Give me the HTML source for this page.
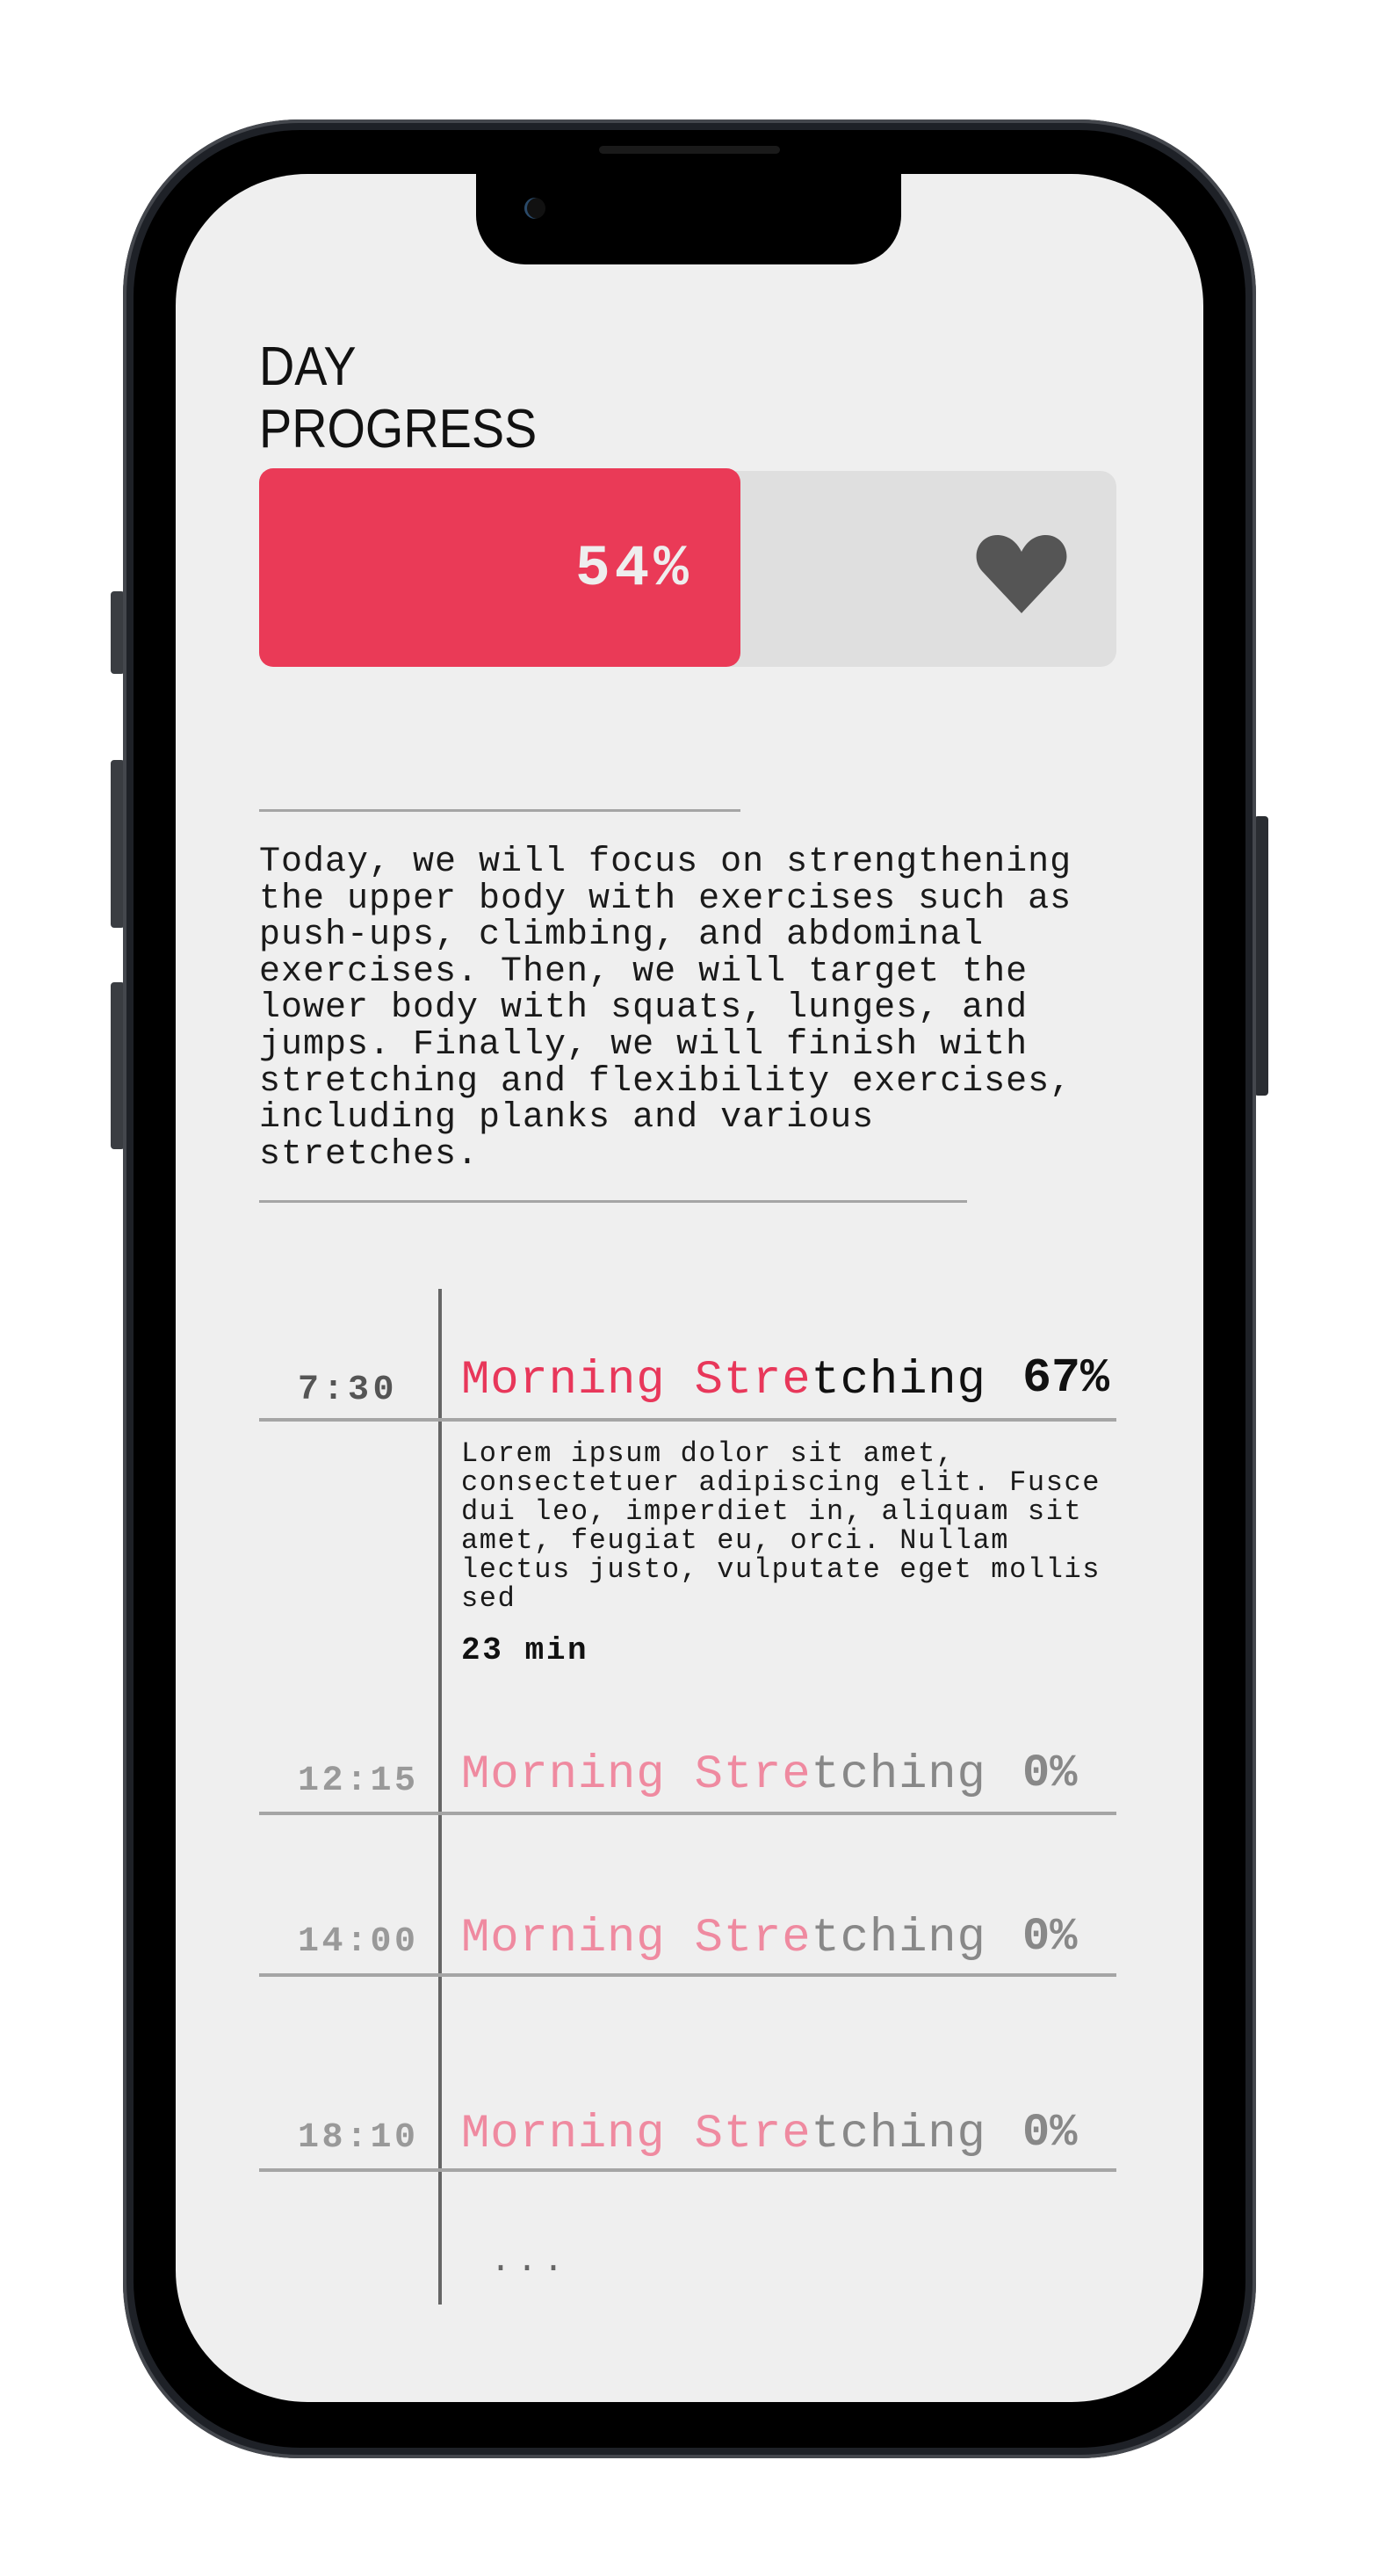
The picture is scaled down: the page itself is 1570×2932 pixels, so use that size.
<!DOCTYPE html>
<html><head><meta charset="utf-8"><style>
*{margin:0;padding:0;box-sizing:border-box}
body{width:1570px;height:2932px;background:#fff;position:relative;overflow:hidden;font-family:"Liberation Mono",monospace}
.a{position:absolute}
.t{position:absolute;line-height:1;white-space:pre}
.hl{position:absolute;height:4px;background:#a5a5a5}
</style></head><body>
<div class="a" style="left:126px;top:673px;width:16px;height:94px;background:#3a3d42;border-radius:4px"></div>
<div class="a" style="left:126px;top:865px;width:16px;height:191px;background:#3a3d42;border-radius:4px"></div>
<div class="a" style="left:126px;top:1118px;width:16px;height:190px;background:#3a3d42;border-radius:4px"></div>
<div class="a" style="left:1428px;top:929px;width:16px;height:318px;background:#2a2d32;border-radius:4px"></div>
<div class="a" style="left:140px;top:136px;width:1290px;height:2662px;background:#1e2127;border-radius:200px;box-shadow:inset 0 0 0 4px #44474d"></div>
<div class="a" style="left:152px;top:148px;width:1266px;height:2638px;background:#000;border-radius:190px"></div>
<div class="a" style="left:200px;top:198px;width:1170px;height:2536px;background:#efefef;border-radius:150px;overflow:hidden">
  <div class="a" style="left:342px;top:-10px;width:484px;height:113px;background:#000;border-radius:0 0 56px 56px"></div>
</div>
<div class="a" style="left:682px;top:166px;width:206px;height:9px;background:#1a1a1a;border-radius:5px"></div>
<div class="a" style="left:597px;top:225px;width:24px;height:24px;background:#111;border-radius:50%;box-shadow:inset 3px 0 0 #2a4a6a"></div>

<div class="t" style="left:295px;top:387px;font-family:'Liberation Sans',sans-serif;font-size:62px;color:#111;transform:scaleX(0.9);transform-origin:left">DAY</div>
<div class="t" style="left:295px;top:458px;font-family:'Liberation Sans',sans-serif;font-size:62px;color:#111;transform:scaleX(0.9);transform-origin:left">PROGRESS</div>

<div class="a" style="left:295px;top:536px;width:976px;height:223px;background:#dfdfdf;border-radius:18px"></div>
<div class="a" style="left:295px;top:533px;width:548px;height:226px;background:#ea3a57;border-radius:16px"></div>
<div class="t" style="left:655px;top:615px;font-size:66px;font-weight:bold;color:#eee;letter-spacing:5px">54%</div>
<svg class="a" style="left:1110px;top:606px" width="106" height="94" viewBox="0 0 106 94"><path d="M53 92 L8 44 C-6 28 4 2 27 3 C40 4 48 12 53 22 C58 12 66 4 79 3 C102 2 112 28 98 44 Z" fill="#555"/></svg>

<div class="hl" style="left:295px;top:921px;width:548px;height:3px"></div>
<div class="t" style="left:295px;top:961px;font-size:40px;color:#1a1a1a;line-height:41.6px;letter-spacing:1px">Today, we will focus on strengthening
the upper body with exercises such as
push-ups, climbing, and abdominal
exercises. Then, we will target the
lower body with squats, lunges, and
jumps. Finally, we will finish with
stretching and flexibility exercises,
including planks and various
stretches.</div>
<div class="hl" style="left:295px;top:1366px;width:806px;height:3px"></div>

<div class="a" style="left:499px;top:1467px;width:4px;height:1156px;background:#666"></div>
<div class="hl" style="left:295px;top:1614px;width:976px"></div>
<div class="hl" style="left:295px;top:2062px;width:976px"></div>
<div class="hl" style="left:295px;top:2246px;width:976px"></div>
<div class="hl" style="left:295px;top:2468px;width:976px"></div>

<div class="t" style="left:339px;top:1563px;font-size:40px;color:#555;letter-spacing:4.5px;font-weight:bold">7:30</div>
<div class="t" style="left:525px;top:1545px;font-size:54px;letter-spacing:0.8px"><span style="color:#e8375a">Morning Stre</span><span style="color:#111">tching</span></div>
<div class="t" style="left:1164px;top:1541px;font-size:55px;font-weight:bold;color:#111">67%</div>
<div class="t" style="left:525px;top:1638px;font-size:32px;line-height:33px;letter-spacing:1.6px;color:#1a1a1a">Lorem ipsum dolor sit amet,
consectetuer adipiscing elit. Fusce
dui leo, imperdiet in, aliquam sit
amet, feugiat eu, orci. Nullam
lectus justo, vulputate eget mollis
sed</div>
<div class="t" style="left:525px;top:1861px;font-size:36px;font-weight:bold;letter-spacing:2.6px;color:#111">23 min</div>

<div class="t" style="left:339px;top:2008px;font-size:40px;color:#999;letter-spacing:3.5px;font-weight:bold">12:15</div>
<div class="t" style="left:525px;top:1994px;font-size:54px;letter-spacing:0.8px"><span style="color:#ef8aa0">Morning Stre</span><span style="color:#888">tching</span></div>
<div class="t" style="left:1164px;top:1993px;font-size:52px;font-weight:bold;color:#888">0%</div>

<div class="t" style="left:339px;top:2191px;font-size:40px;color:#999;letter-spacing:3.5px;font-weight:bold">14:00</div>
<div class="t" style="left:525px;top:2180px;font-size:54px;letter-spacing:0.8px"><span style="color:#ef8aa0">Morning Stre</span><span style="color:#888">tching</span></div>
<div class="t" style="left:1164px;top:2179px;font-size:52px;font-weight:bold;color:#888">0%</div>

<div class="t" style="left:339px;top:2414px;font-size:40px;color:#999;letter-spacing:3.5px;font-weight:bold">18:10</div>
<div class="t" style="left:525px;top:2403px;font-size:54px;letter-spacing:0.8px"><span style="color:#ef8aa0">Morning Stre</span><span style="color:#888">tching</span></div>
<div class="t" style="left:1164px;top:2402px;font-size:52px;font-weight:bold;color:#888">0%</div>

<div class="t" style="left:558px;top:2555px;font-size:40px;color:#666;letter-spacing:6px">...</div>
</body></html>
